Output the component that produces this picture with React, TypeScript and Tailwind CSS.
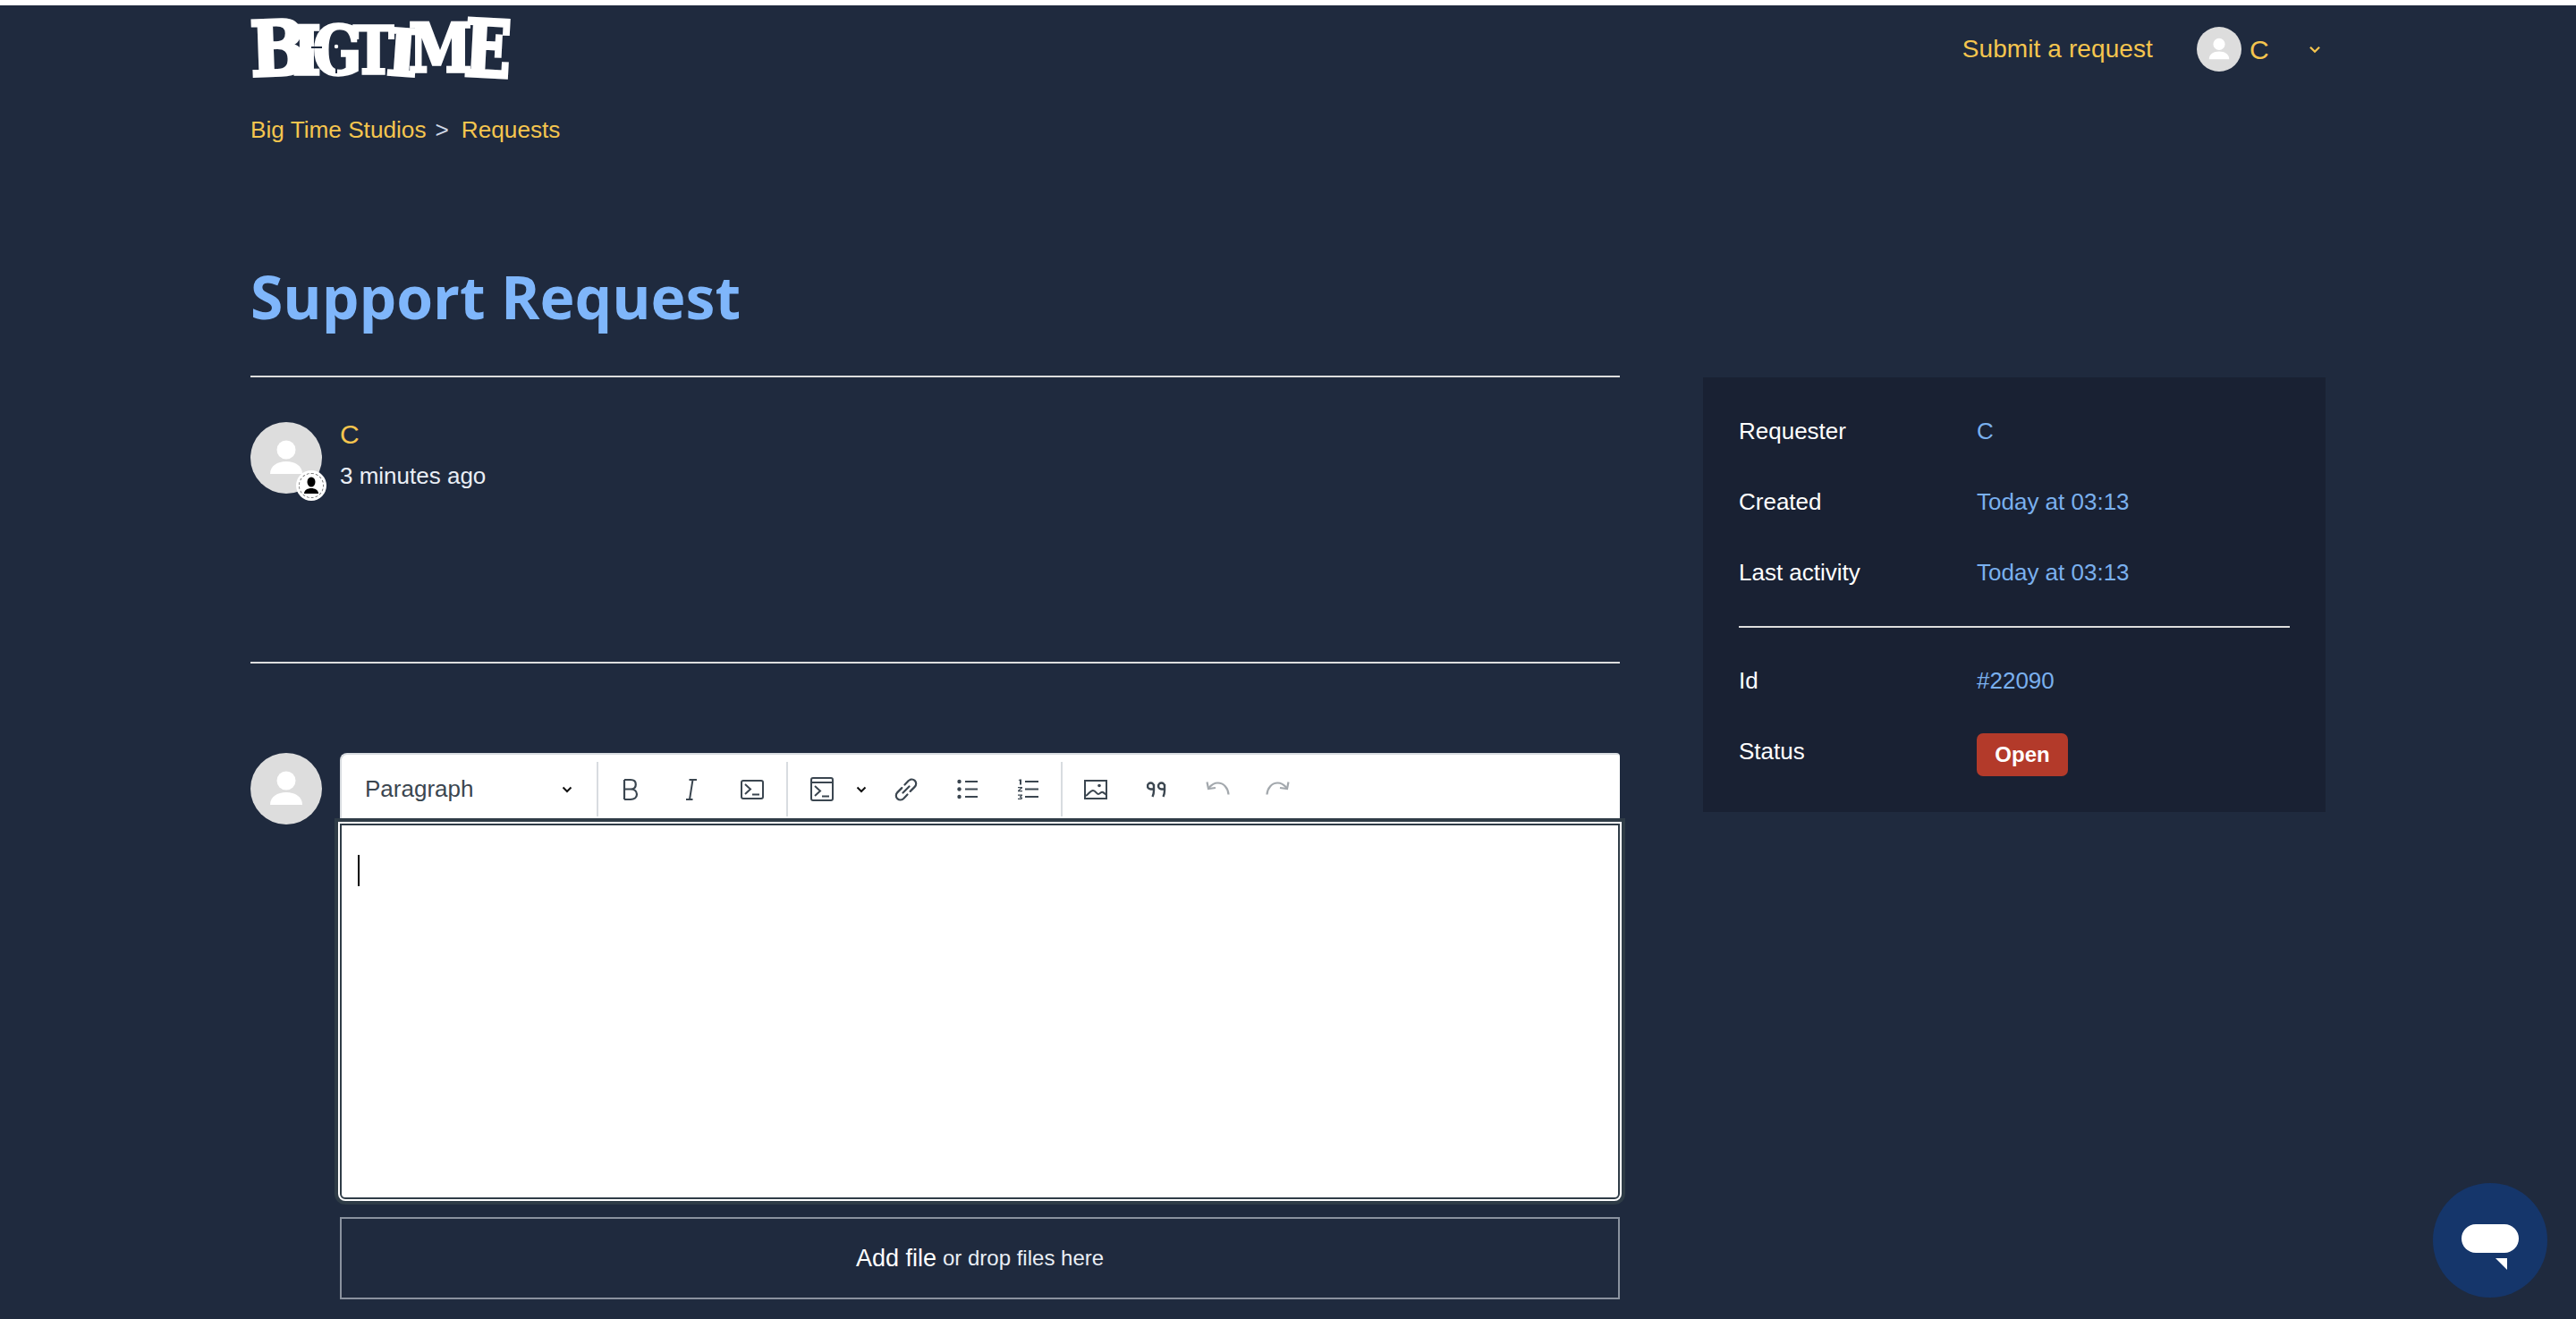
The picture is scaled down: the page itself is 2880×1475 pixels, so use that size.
import type { ReactNode } from "react"

const ink = "#3b4650"

function Avatar({ className }: { className: string }) {
  return (
    <svg viewBox="0 0 80 80" className={className}>
      <circle cx="40" cy="40" r="40" fill="#dddddd" />
      <circle cx="40" cy="31" r="10.5" fill="#fff" />
      <path d="M22 58c0-9 8-14 18-14s18 5 18 14z" fill="#fff" />
    </svg>
  )
}

function BigTimeLogo() {
  const letters = [
    { c: "B", x: 1, y: 68, sx: 1.0, sy: 1.14, r: -2 },
    { c: "I", x: 47, y: 66, sx: 0.92, sy: 1.02, r: 0 },
    { c: "G", x: 70, y: 66, sx: 0.86, sy: 1.0, r: 0 },
    { c: "T", x: 115, y: 65, sx: 0.82, sy: 0.98, r: 0 },
    { c: "I", x: 151, y: 66, sx: 1.0, sy: 0.96, r: 4 },
    { c: "M", x: 177, y: 63, sx: 0.86, sy: 1.0, r: 0 },
    { c: "E", x: 238, y: 67, sx: 0.92, sy: 1.18, r: 3 },
  ]
  return (
    <svg viewBox="0 0 290 74" className="w-[290px] h-[74px] block overflow-visible">
      {letters.map((l, i) => (
        <text
          key={i}
          transform={`translate(${l.x} ${l.y}) rotate(${l.r}) scale(${l.sx} ${l.sy})`}
          fontFamily="'DejaVu Serif', serif"
          fontWeight="700"
          fontSize="74"
          fill="#fff"
          stroke="#fff"
          strokeWidth="3.5"
        >
          {l.c}
        </text>
      ))}
      <path d="M68 36h12M96 35h27M96 35v30" stroke="#1f2a3e" strokeWidth="2" fill="none" />
      <circle cx="96" cy="35" r="3.2" fill="#fff" stroke="#1f2a3e" strokeWidth="2" />
    </svg>
  )
}

function Chevron({ className, color = "#111" }: { className: string; color?: string }) {
  return (
    <svg viewBox="0 0 12 8" className={className} fill="none">
      <path d="M1.5 1.5 6 6l4.500-4.500" stroke={color} strokeWidth="2" />
    </svg>
  )
}

function ToolBtn({ children }: { children: ReactNode }) {
  return <div className="w-[68px] h-full flex items-center justify-center shrink-0">{children}</div>
}

function Sep() {
  return <div className="w-[2px] h-[61px] bg-[#d8dce0] shrink-0" />
}

function Toolbar() {
  return (
    <div className="h-[73px] bg-white rounded-tl-[8px] rounded-tr-[4px] border-t-2 border-l-2 border-[#d8dce0] flex items-center pt-[6px]">
      <div className="w-[285px] pl-[26px] pr-[27px] flex items-center justify-between shrink-0">
        <span className="text-[26px] text-[#3b4650]">Paragraph</span>
        <Chevron className="w-[12px] h-[8px]" />
      </div>
      <Sep />
      <div className="w-[2px] shrink-0" />
      <ToolBtn>
        <svg width="18" height="26" viewBox="0 0 18 26" fill="none" stroke={ink} strokeWidth="2.2">
          <path d="M2 2v22M2 2h7c3.600 0 5.800 2 5.800 5.200S12.600 12.500 9 12.500H2M9 12.500c4.200 0 7 2.300 7 5.800S13.200 24 9 24H2" />
        </svg>
      </ToolBtn>
      <ToolBtn>
        <svg width="14" height="26" viewBox="0 0 14 26" fill="none" stroke={ink} strokeWidth="2">
          <path d="M8.500 2 5 24M4.500 2h8.500M1 24h7.500" />
        </svg>
      </ToolBtn>
      <ToolBtn>
        <svg width="26" height="22" viewBox="0 0 26 22" fill="none" stroke={ink} strokeWidth="2">
          <rect x="1" y="1" width="24" height="20" rx="2" />
          <path d="M5 5l6 5.500L5 16M13 16.500h8" />
        </svg>
      </ToolBtn>
      <div className="w-[4px] shrink-0" />
      <Sep />
      <div className="w-[13px] shrink-0" />
      <div className="w-[50px] h-full flex items-center justify-center shrink-0">
        <svg width="26" height="27" viewBox="0 0 26 27" fill="none" stroke={ink} strokeWidth="2">
          <rect x="1" y="1" width="24" height="25" rx="2" />
          <path d="M1 6h24M5 10l6 5.500L5 21M13 21.500h8" />
        </svg>
      </div>
      <div className="w-[13px] shrink-0" />
      <div className="w-[12px] flex justify-center shrink-0">
        <Chevron className="w-[12px] h-[8px]" />
      </div>
      <div className="w-[21px] shrink-0" />
      <div className="w-[46px] h-full flex items-center justify-center shrink-0">
        <svg width="26" height="26" viewBox="0 0 26 26" fill="none" stroke={ink} strokeWidth="2.200" strokeLinecap="round">
          <path d="M11.500 7.500l4-4.200c2-2 5.200-2.200 7.200-.4s2 5 0 7l-5 5" />
          <path d="M14.500 18.500l-4 4.200c-2 2-5.200 2.200-7.200.4s-2-5 0-7l5-5" />
          <path d="M9.500 16.500l7-7" />
        </svg>
      </div>
      <div className="w-[11px] shrink-0" />
      <ToolBtn>
        <svg width="23" height="23" viewBox="0 0 23 23" fill={ink}>
          <circle cx="2.500" cy="3" r="2.200" />
          <circle cx="2.500" cy="11.500" r="2.200" />
          <circle cx="2.500" cy="20" r="2.200" />
          <rect x="9" y="2" width="14" height="2" />
          <rect x="9" y="10.500" width="14" height="2" />
          <rect x="9" y="19" width="14" height="2" />
        </svg>
      </ToolBtn>
      <ToolBtn>
        <svg width="23" height="23" viewBox="0 0 23 23" fill={ink}>
          <rect x="8" y="2" width="15" height="2" />
          <rect x="8" y="10.500" width="15" height="2" />
          <rect x="8" y="19" width="15" height="2" />
          <path d="M2 .5h2v6H2zM.5 1.500 2 .5v1.500zM0 9h5v1.200L1.800 13H5v1.200H0V13l3.200-2.800H0zM0 17.500h5v1.200l-2 1.500c1.500 0 2 .5 2 1.300 0 1-1 1.500-2.500 1.500H0v-1.200h2.500c.8 0 1-.1 1-.4 0-.3-.4-.4-1.500-.4V19.800l1.500-1.100H0z" />
        </svg>
      </ToolBtn>
      <div className="w-[3px] shrink-0" />
      <Sep />
      <div className="w-[3px] shrink-0" />
      <ToolBtn>
        <svg width="26" height="22" viewBox="0 0 26 22" fill="none" stroke={ink} strokeWidth="2">
          <rect x="1" y="1" width="24" height="20" />
          <circle cx="17" cy="6.500" r="1.800" fill={ink} stroke="none" />
          <path d="M2 18c3-2 5-6 8-6s4 4 6 4 3-3 5-2 2.500 2 4 3" />
        </svg>
      </ToolBtn>
      <ToolBtn>
        <svg width="22" height="19" viewBox="0 0 22 19" fill="none" stroke={ink} strokeWidth="2.400">
          <path d="M8 6a3.500 3.500 0 1 0-3.500 3.500H8M8 4v7c0 3-.5 5-1.500 7" />
          <path d="M20 6a3.500 3.500 0 1 0-3.500 3.500H20M20 4v7c0 3-.5 5-1.500 7" />
        </svg>
      </ToolBtn>
      <ToolBtn>
        <svg width="27" height="17" viewBox="0 0 27 17" fill="none" stroke="#a3a8ad" strokeWidth="2.200" className="-mt-[5px]">
          <path d="M25.500 16.500C25 9 20 3.500 13.500 3.500c-4 0-7 2-10 5.500" />
          <path d="M1.500 2.500l1.500 7.500 8-1" />
        </svg>
      </ToolBtn>
      <div className="-ml-[1px] w-[68px] h-full flex items-center justify-center shrink-0">
        <svg width="27" height="17" viewBox="0 0 27 17" fill="none" stroke="#a3a8ad" strokeWidth="2.200" className="-mt-[5px]">
          <path d="M1.500 16.500C2 9 7 3.500 13.500 3.500c4 0 7 2 10 5.500" />
          <path d="M25.500 2.500l-1.500 7.500-8-1" />
        </svg>
      </div>
    </div>
  )
}

function InfoRow({ label, children, className }: { label: string; children: ReactNode; className: string }) {
  return (
    <div className={`flex items-start ${className}`}>
      <div className="w-[266px] text-white">{label}</div>
      <div className="text-[#7ab0ee]">{children}</div>
    </div>
  )
}

export default function App() {
  return (
    <div
      className="h-screen overflow-hidden relative bg-[#1f2a3e] text-white"
      style={{ fontFamily: "'Liberation Sans', Arial, sans-serif" }}
    >
      <div className="h-[6px] bg-white" />

      <div className="px-[280px]">
        {/* Header */}
        <header className="flex justify-between items-start pt-[11px]">
          <BigTimeLogo />
          <div className="flex items-center pt-[13px] text-[28px] text-[#f5c54e]">
            <span className="mr-[49px] tracking-[0.1px]">Submit a request</span>
            <Avatar className="w-[50px] h-[50px]" />
            <span className="ml-[9px] w-[66px] text-[30px]">C</span>
            <Chevron className="w-[14px] h-[9px] mr-[5px]" color="#f5c54e" />
          </div>
        </header>

        <nav className="mt-[38px] mb-[1px] text-[26.2px] leading-[32px] flex text-[#f5c54e]">
          <span>Big Time Studios</span>
          <span className="text-[#cfd8e6] ml-[10px] mr-[14px]">&gt;</span>
          <span>Requests</span>
        </nav>

        <div className="flex gap-[93px]">
          {/* Request + reply */}
          <main className="w-[1531px] shrink-0">
            <h1
              className="mt-[124px] text-[66px] leading-[90px] font-bold text-[#7fb6fb] h-[134px]"
              style={{ fontFamily: "'Open Sans', sans-serif" }}
            >
              Support Request
            </h1>
            <div className="h-[2px] bg-[#dddddd]" />

            <div className="flex mt-[50px] h-[268px]">
              <div className="relative w-[80px] h-[80px] shrink-0">
                <Avatar className="w-[80px] h-[80px]" />
                <div className="absolute left-[51px] top-[54px] w-[34px] h-[34px] rounded-full bg-white flex items-center justify-center">
                  <div className="w-[28px] h-[28px] rounded-full border border-dashed border-[#777] flex items-center justify-center">
                    <svg width="16" height="20" viewBox="0 0 16 20" fill="#000">
                      <ellipse cx="8" cy="6" rx="4.500" ry="5.500" />
                      <path d="M0 19c0-4 4-6 8-6s8 2 8 6z" />
                    </svg>
                  </div>
                </div>
              </div>
              <div className="ml-[20px] text-[26px]">
                <div className="text-[30px] leading-[28px] text-[#f5c54e]">C</div>
                <div className="mt-[16px] leading-[32px] text-[#e9eef5]">3 minutes ago</div>
              </div>
            </div>
            <div className="h-[2px] bg-[#dddddd]" />

            <div className="flex mt-[100px]">
              <Avatar className="w-[80px] h-[80px] shrink-0" />
              <div className="ml-[20px] flex-1 min-w-0">
                <Toolbar />
                <div className="h-[6px]" />
                <div className="h-[420px] bg-white border-2 border-[#2f3c47] rounded-b-[6px] shadow-[0_0_0_2px_#fff,0_0_0_6px_#2f3c47] pl-[18px] pt-[33px]">
                  <div className="w-[2px] h-[35px] bg-black" />
                </div>
                <div className="mt-[20px] h-[92px] border-2 border-[#8a929f] flex items-center justify-center">
                  <span className="text-[27px] text-white">Add file</span>
                  <span className="text-[24px] ml-[7px] text-[#e9eef5]">or drop files here</span>
                </div>
              </div>
            </div>
          </main>

          {/* Sidebar */}
          <aside className="w-[696px] h-[486px] mt-[260px] bg-[#192133] px-[40px] pt-[44px] text-[26px] leading-[32px]">
            <InfoRow label="Requester" className="h-[79px]">C</InfoRow>
            <InfoRow label="Created" className="h-[79px]">Today at 03:13</InfoRow>
            <InfoRow label="Last activity" className="h-[76px]">Today at 03:13</InfoRow>
            <div className="h-[2px] bg-[#dddddd] mb-[43px]" />
            <InfoRow label="Id" className="h-[79px]">#22090</InfoRow>
            <InfoRow label="Status" className="h-[60px]">
              <span className="-mt-[4px] block w-[102px] h-[48px] rounded-[7px] bg-[#b33a2a] text-white font-bold text-[24px] leading-[48px] text-center">
                Open
              </span>
            </InfoRow>
          </aside>
        </div>
      </div>

      {/* Chat launcher */}
      <div className="absolute right-[32px] bottom-[24px] w-[128px] h-[128px] rounded-full bg-[#15366b] flex items-center justify-center">
        <svg width="64" height="52" viewBox="0 0 64 52" className="mt-[16px]">
          <rect width="64" height="32" rx="16" fill="#fff" />
          <path d="M38 38h13v13z" fill="#fff" />
        </svg>
      </div>
    </div>
  )
}
